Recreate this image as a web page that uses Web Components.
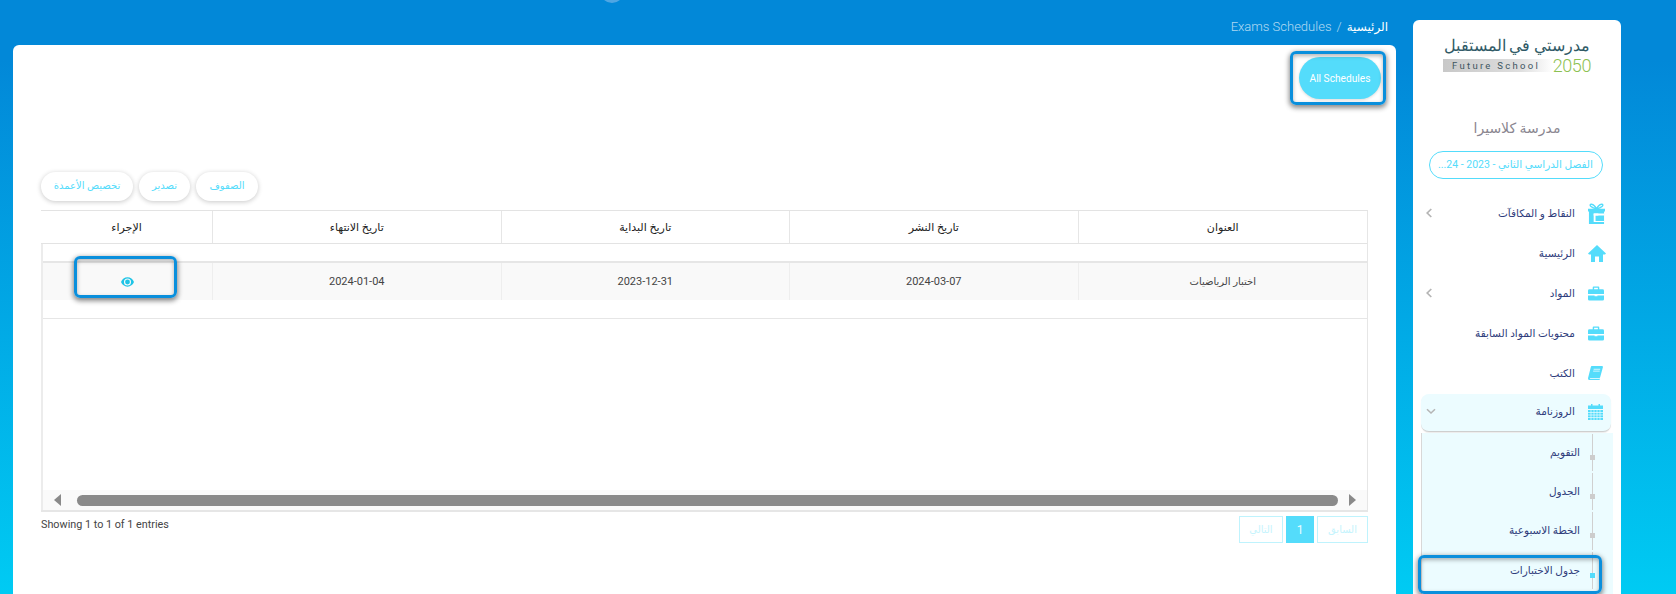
<!DOCTYPE html>
<html lang="ar">
<head>
<meta charset="utf-8">
<title>Exams Schedules</title>
<style>
html,body{margin:0;height:594px;overflow:hidden}
body{
    background:linear-gradient(180deg,#0288d8 0,#0288d8 60px,#00cbf3 594px);
    font-family:Roboto,"Noto Sans","DejaVu Sans",sans-serif;
    position:relative;
}
.pagina{display:grid;grid-template-columns:1383px 208px;column-gap:17px;padding-left:13px;height:594px}
.centro{display:flex;flex-direction:column;min-width:0}
.puntito{position:absolute;left:600px;top:-21px;width:24px;height:24px;border-radius:50%;background:#4fa6e3}
</style>
</head>
<body>
<div class="puntito"></div>
<div class="pagina">
    <div class="centro">
        <bread-crumb></bread-crumb>
        <main-card>
            <tour-ring slot="top" style="right:10px;top:6px;width:96px;height:54px"></tour-ring>
            <all-button slot="top">All Schedules</all-button>
            <tool-bar slot="tools"></tool-bar>
            <exam-table slot="table"></exam-table>
            <table-foot slot="foot"></table-foot>
        </main-card>
    </div>
    <school-sidebar></school-sidebar>
</div>

<script>
const AZUL = "#54dcfb"

const ICONOS = {
    gift:`<svg viewBox="0 0 18 22" width="17" height="21" fill="none"><path d="M9 6C7 2 4 .5 2.600 1.400 1.600 2.200 3 5 9 6zM9 6c2-4 5-5.500 6.400-4.600C16.400 2.200 15 5 9 6z" stroke="${AZUL}" stroke-width="1.500"/><path d="M0 6h18v3H0zM1 9h16v13H1z" fill="${AZUL}"/><path d="M6 11h11v2H6v6h11v1H6z" fill="#fff"/><path d="M6 11h5v2H8v6H6z" fill="#fff"/></svg>`,
    home:`<svg viewBox="0 0 18 17" width="18" height="17"><path fill="${AZUL}" d="M9 0 0 8.500 1 9.500h2V17h4v-5.500h4V17h4V9.500h2l1-1z"/></svg>`,
    case:`<svg viewBox="0 0 17 15" width="16" height="15"><path fill="${AZUL}" d="M6 0h5a1 1 0 0 1 1 1v2h3.500A1.500 1.500 0 0 1 17 4.500V8H0V4.500A1.500 1.500 0 0 1 1.500 3H5V1a1 1 0 0 1 1-1zm.500 1.300V3h4V1.300zM0 9.500h7v1h3v-1h7v4A1.500 1.500 0 0 1 15.500 15h-14A1.500 1.500 0 0 1 0 13.500z"/></svg>`,
    book:`<svg viewBox="0 0 16 15" width="15" height="14"><path fill="${AZUL}" d="M4 0h11a1 1 0 0 1 1 1l-3 11a1.500 1.500 0 0 1-1.400 1H2.500c-.8 0-1 .7-.3 1H12l.7-.6.3.6-.7.800a1 1 0 0 1-.8.200H2C.6 15-.3 14 .1 12.700L3 1a1.300 1.300 0 0 1 1-1z"/><path stroke="#fff" stroke-width=".8" d="M6 3.500h7M5.500 5.500h7"/></svg>`,
    cal:`<svg viewBox="0 0 15 16" width="15" height="16"><path fill="${AZUL}" d="M0 1.500h3V0h1.500v1.500h6V0H12v1.500h3V5H0z"/><path fill="${AZUL}" d="M0 6h15v10H0z"/><path stroke="#ecfcff" stroke-width=".7" d="M0 8.500h15M0 11h15M0 13.500h15M3 6v10M6 6v10M9 6v10M12 6v10"/></svg>`,
    left:`<svg viewBox="0 0 6 10" width="6" height="10" fill="none"><path d="M5.300 1 1.200 5l4.100 4" stroke="#b5b5b5" stroke-width="1.700"/></svg>`,
    down:`<svg viewBox="0 0 10 7" width="10" height="7" fill="none"><path d="M1 1.200 5 5l4-3.800" stroke="#b5b5b5" stroke-width="1.500"/></svg>`,
    eye:`<svg viewBox="0 0 14 10" width="13" height="10"><path fill="#1fc4e6" fill-rule="evenodd" d="M7 0C3.800 0 1.200 2 0 5c1.200 3 3.800 5 7 5s5.800-2 7-5c-1.200-3-3.800-5-7-5zm0 1.200A3.800 3.800 0 1 1 7 8.800 3.800 3.800 0 0 1 7 1.200z"/><circle cx="7" cy="5" r="2.600" fill="#1fc4e6"/></svg>`
}

class BreadCrumb extends HTMLElement{
    connectedCallback(){
        this.attachShadow({mode:"open"})
        this.shadowRoot.innerHTML=`
        <style>
            :host{display:flex;height:45px;box-sizing:border-box;padding:18px 8px 0 0;justify-content:flex-start;direction:rtl;font-size:13px;font-weight:300;color:rgba(255,255,255,.7);line-height:18px}
            b{font-weight:400;color:#fff;font-size:12px}
            span{margin-right:5px}
        </style>
        <b>الرئيسية</b><span>/</span><span dir="ltr">Exams Schedules</span>`
    }
}
customElements.define("bread-crumb", BreadCrumb)

class TourRing extends HTMLElement{
    connectedCallback(){
        this.attachShadow({mode:"open"})
        this.shadowRoot.innerHTML=`
        <style>
            :host{position:absolute;box-sizing:border-box;border:3px solid #0a8fdc;border-radius:6px;box-shadow:0 2px 5px 1px rgba(0,0,0,.45),inset 0 2px 4px rgba(0,0,0,.3);pointer-events:none;z-index:5}
        </style>`
    }
}
customElements.define("tour-ring", TourRing)

class MainCard extends HTMLElement{
    connectedCallback(){
        this.attachShadow({mode:"open"})
        this.shadowRoot.innerHTML=`
        <style>
            :host{display:flex;flex-direction:column;flex:1;background:#fff;border-radius:6px 6px 0 0;padding:0 28px;position:relative}
            .arriba{display:flex;justify-content:flex-end;padding:12px 0 0;margin-right:-13px;height:127px;box-sizing:border-box}
        </style>
        <div class="arriba"><slot name="top"></slot></div>
        <slot name="tools"></slot>
        <slot name="table"></slot>
        <slot name="foot"></slot>`
    }
}
customElements.define("main-card", MainCard)

class AllButton extends HTMLElement{
    connectedCallback(){
        this.attachShadow({mode:"open"})
        this.shadowRoot.innerHTML=`
        <style>
            :host{display:flex;align-items:center;justify-content:center;width:82px;height:42px;border-radius:21px;background:${AZUL};color:#fff;font-size:10.200px;box-shadow:0 1px 3px rgba(0,0,0,.15)}
        </style>
        <slot></slot>`
    }
}
customElements.define("all-button", AllButton)

class ToolBar extends HTMLElement{
    connectedCallback(){
        this.attachShadow({mode:"open"})
        this.shadowRoot.innerHTML=`
        <style>
            :host{display:flex;gap:6px;height:38px;align-items:flex-start;direction:ltr}
            div{height:29px;line-height:28px;border-radius:15px;background:#fff;color:${AZUL};font-size:10px;text-align:center;box-shadow:0 1px 5px rgba(0,0,0,.22)}
        </style>
        <div style="width:92px" dir="rtl">تخصيص الأعمدة</div>
        <div style="width:51px" dir="rtl">تصدير</div>
        <div style="width:62px" dir="rtl">الصفوف</div>`
    }
}
customElements.define("tool-bar", ToolBar)

class ExamTable extends HTMLElement{
    connectedCallback(){
        this.attachShadow({mode:"open"})
        const cabecera = ["العنوان","تاريخ النشر","تاريخ البداية","تاريخ الانتهاء","الإجراء"]
        const fila = ["2024-03-07","2023-12-31","2024-01-04"]
        this.shadowRoot.innerHTML=`
        <style>
            :host{display:flex;flex-direction:column;height:302px;box-sizing:border-box;border-top:1px solid #e3e3e3;border-bottom:2px solid #e6e6e6;border-right:1px solid #e6e6e6;position:relative;direction:rtl;font-size:11px;color:#444}
            .fila{display:grid;grid-template-columns:repeat(4,288.5px) 1fr}
            .fila div{display:flex;align-items:center;justify-content:center}
            .head{height:33px;box-sizing:border-box;border-bottom:1px solid #e3e3e3;font-weight:500;color:#222}
            .head div+div{border-right:1px solid #e6e6e6}
            .cuerpo{flex:1;display:flex;flex-direction:column;border-left:2px solid #ececec}
            .vacia{height:19px;box-sizing:border-box;border-bottom:2px solid #e6e6e6}
            .datos{height:37px;background:#f9f9f9;font-size:11px}
            .datos div+div{border-right:1px solid #eee}
            .datos .ar{font-size:10px;font-weight:500}
            .linea{height:19px;box-sizing:border-box;border-bottom:1px solid #e6e6e6}
            .espacio{flex:1}
            .scroll{display:flex;align-items:center;height:20px;background:#fafafa;direction:ltr;padding:0 11px}
            .barra{flex:1;height:11px;border-radius:6px;background:#8a8a8a;margin:0 11px 0 16px}
            .fl{width:0;height:0;border-top:6.500px solid transparent;border-bottom:6.500px solid transparent}
            svg{display:block}
        </style>
        <div class="fila head">${cabecera.map(t=>`<div>${t}</div>`).join("")}</div>
        <div class="cuerpo">
            <div class="vacia"></div>
            <div class="fila datos"><div class="ar">اختبار الرياضيات</div>${fila.map(t=>`<div>${t}</div>`).join("")}<div>${ICONOS.eye}</div></div>
            <div class="linea"></div>
            <div class="espacio"></div>
            <div class="scroll">
                <span class="fl" style="border-right:7px solid #8a8a8a"></span>
                <div class="barra"></div>
                <span class="fl" style="border-left:7px solid #8a8a8a"></span>
            </div>
        </div>
        <tour-ring style="left:33px;top:45px;width:103px;height:42px"></tour-ring>`
    }
}
customElements.define("exam-table", ExamTable)

class TableFoot extends HTMLElement{
    connectedCallback(){
        this.attachShadow({mode:"open"})
        this.shadowRoot.innerHTML=`
        <style>
            :host{display:flex;justify-content:space-between;align-items:flex-start;padding-top:4px;font-size:10.800px;color:#444}
            .info{line-height:16px;padding-top:1px}
            .pags{display:flex;gap:3px;direction:ltr}
            .pags div{height:27px;box-sizing:border-box;border:1px solid #bff3fd;color:#c6f4fd;display:flex;align-items:center;justify-content:center;font-size:10px}
            .pags .on{background:${AZUL};border-color:${AZUL};color:#eafcff;font-size:12px}
        </style>
        <div class="info">Showing 1 to 1 of 1 entries</div>
        <div class="pags">
            <div style="width:44px">التالي</div>
            <div class="on" style="width:28px">1</div>
            <div style="width:51px">السابق</div>
        </div>`
    }
}
customElements.define("table-foot", TableFoot)

class SideItem extends HTMLElement{
    connectedCallback(){
        this.attachShadow({mode:"open"})
        const icono = this.getAttribute("icon")
        const flecha = this.getAttribute("arrow")
        this.shadowRoot.innerHTML=`
        <style>
            :host{display:flex;align-items:center;height:40px;direction:rtl;font-size:10.500px;font-weight:500;color:#2f3d7c;padding:0 2px 0 0}
            .ic{width:24px;box-sizing:border-box;padding-left:3px;display:flex;justify-content:flex-end;margin-left:1px;flex:none}
            .tx{flex:1;padding-right:9px;white-space:nowrap}
            .fl{display:flex;width:20px;justify-content:flex-start;padding-left:5px;box-sizing:border-box;direction:ltr}
        </style>
        <span class="ic">${ICONOS[icono]||""}</span>
        <span class="tx"><slot></slot></span>
        ${flecha?`<span class="fl">${ICONOS[flecha]}</span>`:""}`
    }
}
customElements.define("side-item", SideItem)

class SubItem extends HTMLElement{
    connectedCallback(){
        this.attachShadow({mode:"open"})
        const activo = this.hasAttribute("active")
        this.shadowRoot.innerHTML=`
        <style>
            :host{display:flex;height:39.200px;direction:rtl;font-size:10.500px;font-weight:500;color:#2f3d7c;position:relative;padding:13px 33px 0 0;box-sizing:border-box;line-height:14px}
            .v{position:absolute;right:20px;top:1px;bottom:1px;width:1px;background:#d0d0d0}
            .p{position:absolute;right:18px;top:22px;width:5px;height:5px;background:${activo?AZUL:"#cdcdcd"}}
        </style>
        <i class="v"></i><i class="p"></i><slot></slot>`
    }
}
customElements.define("sub-item", SubItem)

class SchoolSidebar extends HTMLElement{
    connectedCallback(){
        this.attachShadow({mode:"open"})
        this.shadowRoot.innerHTML=`
        <style>
            :host{display:block;margin-top:20px;background:#fff;border-radius:6px 6px 0 0;position:relative;overflow:hidden;height:574px}
            .logo{margin:15px auto 0;width:148px;height:42px;color:#2f5a66;direction:ltr}
            .logo .ar{font-size:15.600px;line-height:22px;text-align:center;direction:rtl;white-space:nowrap;font-weight:300}
            .logo .en{display:flex;align-items:center;height:13px;margin-top:2px}
            .logo .gris{width:111px;height:13px;background:linear-gradient(90deg,#c8c8c8,#dedede 70%,#fff 100%);font-size:9.500px;letter-spacing:2.300px;color:#3d5560;line-height:13px;padding-left:9px;box-sizing:border-box;white-space:nowrap}
            .logo .num{font-size:18px;color:#8cc152;font-weight:300;margin-left:0;line-height:13px;letter-spacing:-.4px}
            .nombre{margin-top:41px;text-align:center;font-size:14px;color:#8a8690;direction:rtl;line-height:20px}
            .select{margin:13px 18px 0 16px;height:28px;box-sizing:border-box;border:1px solid ${AZUL};border-radius:14px;direction:rtl;color:${AZUL};font-size:10.500px;line-height:26px;padding:0 9px;white-space:nowrap;overflow:hidden}
            .lista{margin-top:14px;padding:0 10px 0 8px}
            .abierto{background:#ecfcff;border-radius:8px;border-bottom:1px solid #cfcfcf;height:37px;margin:1px 0 0 0;box-shadow:0 1px 1px rgba(0,0,0,.08)}
            .abierto side-item{height:35px}
            .sub{background:#ecfcff;margin:1px -2px 0 0;border-left:1px solid #d8d8d8;height:165px}
        </style>
        <div class="logo">
            <div class="ar">مدرستي في المستقبل</div>
            <div class="en"><div class="gris">Future School</div><div class="num">2050</div></div>
        </div>
        <div class="nombre">مدرسة كلاسيرا</div>
        <div class="select">الفصل الدراسي الثاني - 2023 - 24...</div>
        <div class="lista">
            <side-item icon="gift" arrow="left">النقاط و المكافآت</side-item>
            <side-item icon="home">الرئيسية</side-item>
            <side-item icon="case" arrow="left">المواد</side-item>
            <side-item icon="case">محتويات المواد السابقة</side-item>
            <side-item icon="book">الكتب</side-item>
            <div class="abierto"><side-item icon="cal" arrow="down">الروزنامة</side-item></div>
            <div class="sub">
                <sub-item>التقويم</sub-item>
                <sub-item>الجدول</sub-item>
                <sub-item>الخطة الاسبوعية</sub-item>
                <sub-item active>جدول الاختبارات</sub-item>
            </div>
        </div>
        <tour-ring style="left:5px;top:535px;width:184px;height:39px"></tour-ring>`
    }
}
customElements.define("school-sidebar", SchoolSidebar)
</script>
</body>
</html>
